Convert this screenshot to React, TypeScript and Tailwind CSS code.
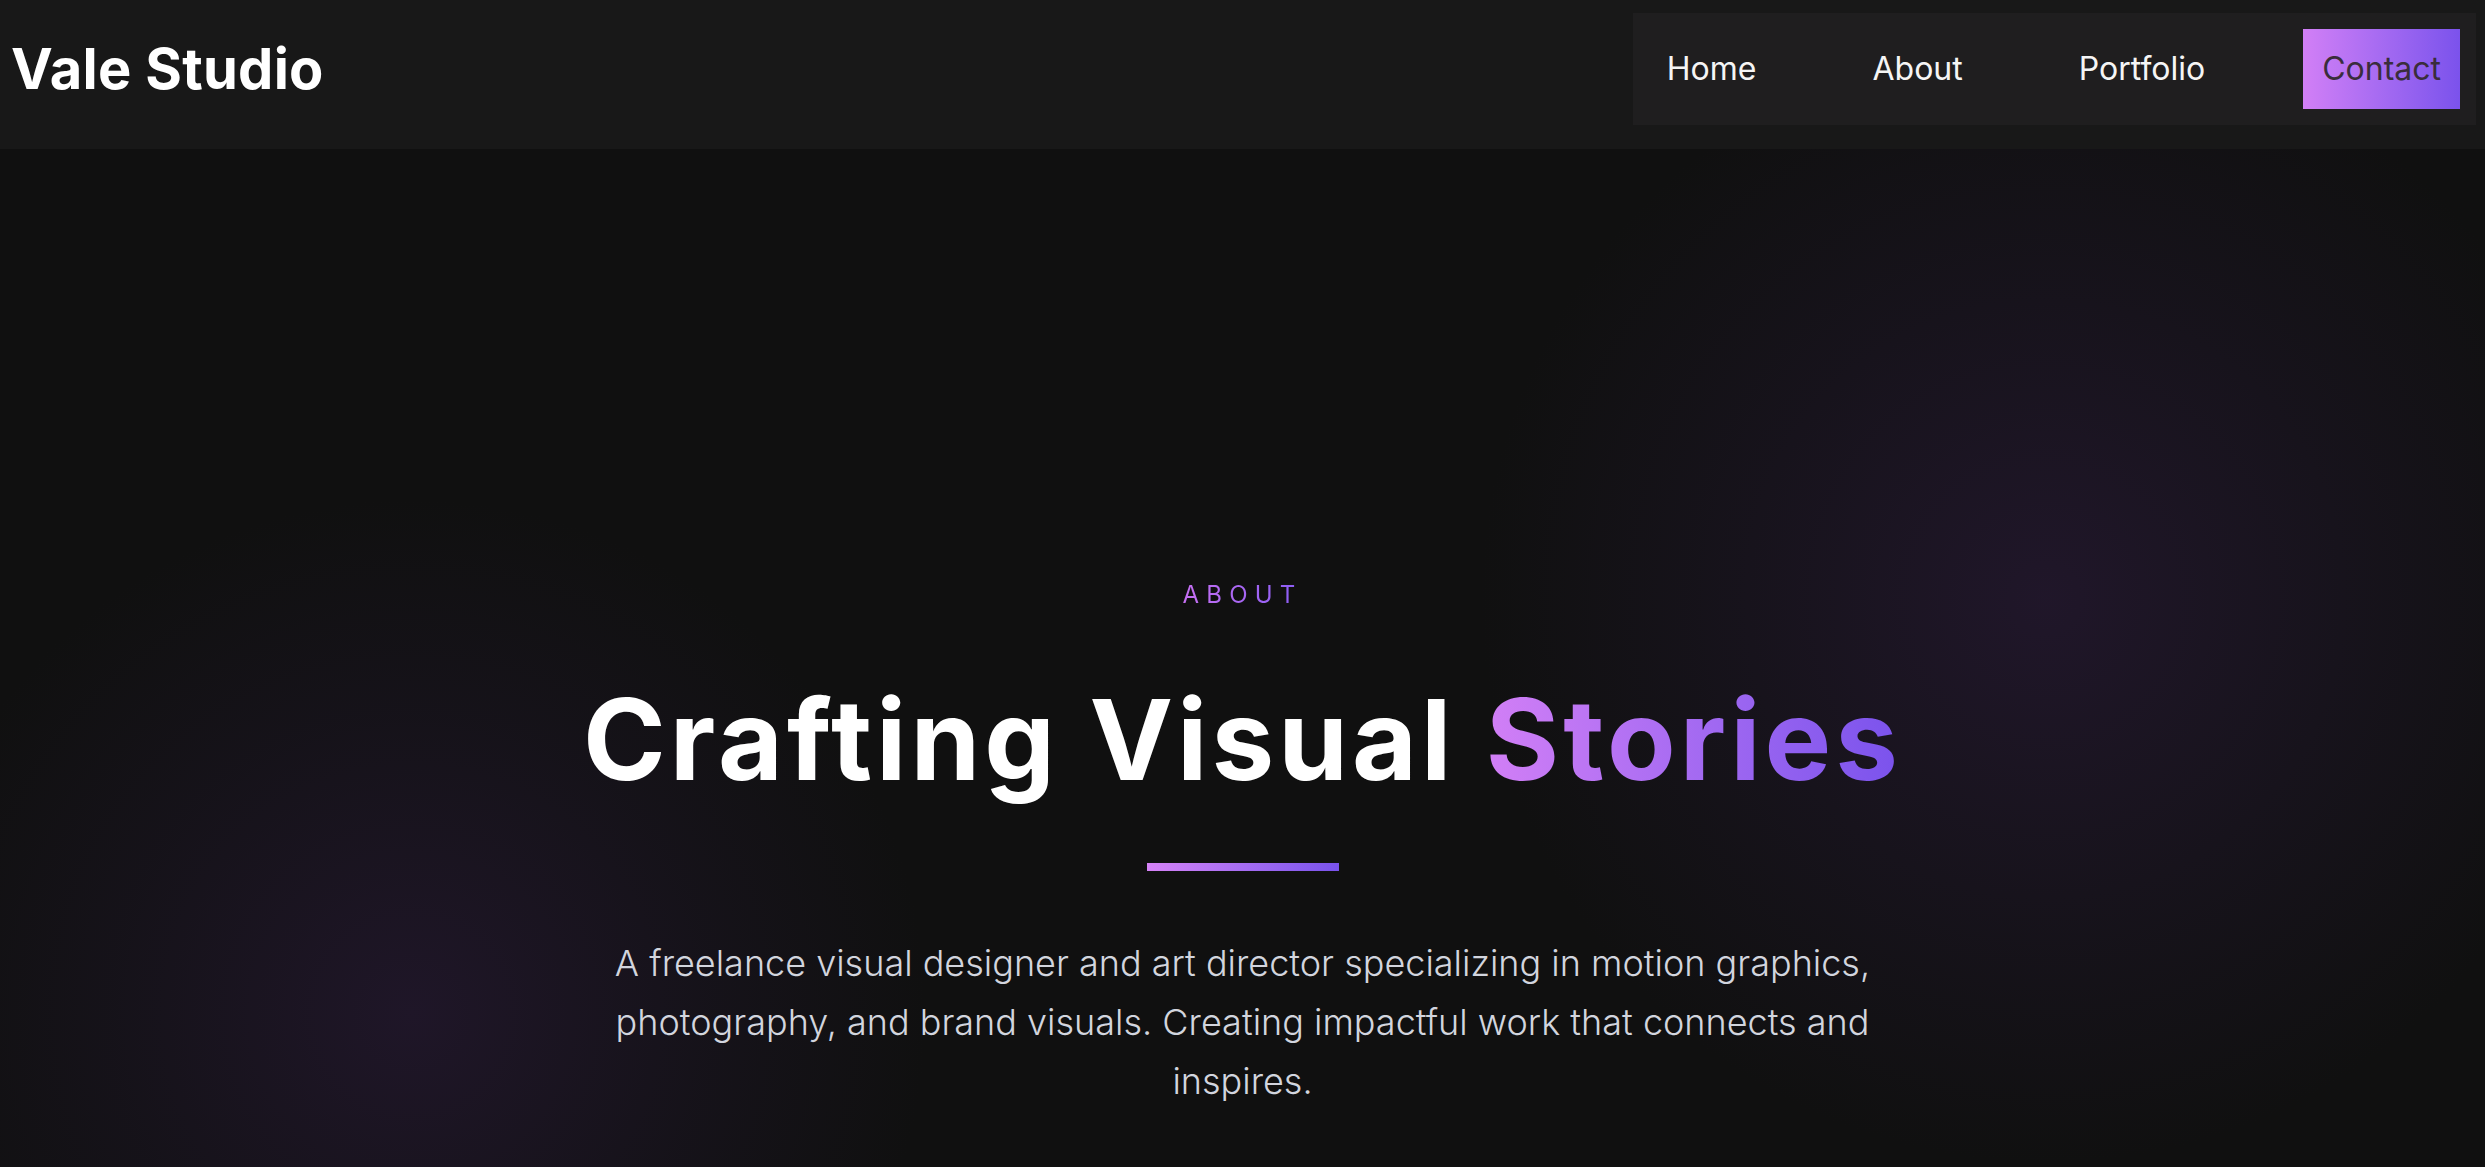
export default function App() {
  const links = ["Home", "About", "Portfolio"]

  return (
    <div className="min-h-screen bg-[#101010] font-['Inter',sans-serif] text-white">
      <header className="flex h-[149px] items-center justify-between bg-[#181818] pb-[11px] pl-[11px] pr-[9px]">
        <a href="#" className="text-[56px] font-bold leading-none tracking-[0.005em] text-white">
          Vale Studio
        </a>
        <nav className="flex items-center gap-[80px] bg-[#1f1e1f] p-4">
          {links.map((link) => (
            <a key={link} href="#" className="flex h-20 items-center px-[18px] text-[32px] text-[#f5f5f5]">
              {link}
            </a>
          ))}
          <a
            href="#"
            className="flex h-20 items-center bg-gradient-to-r from-[#d27ff6] to-[#7b52ec] px-[19px] text-[32px] text-[#3a2d3c]"
          >
            Contact
          </a>
        </nav>
      </header>

      <main className="relative overflow-hidden pb-[200px] pt-[434px]">
        {/* soft glows behind the hero */}
        <div className="pointer-events-none absolute left-[1475px] top-[-120px] h-[1140px] w-[1140px] rounded-full bg-[radial-gradient(circle,rgba(36,24,48,0.8)_0%,rgba(30,22,40,0.45)_40%,transparent_70%)]" />
        <div className="pointer-events-none absolute left-[-108px] top-[345px] h-[1040px] w-[1040px] rounded-full bg-[radial-gradient(circle,rgba(36,24,48,0.75)_0%,rgba(30,22,40,0.4)_40%,transparent_70%)]" />

        <section className="relative flex flex-col items-center text-center">
          <span className="bg-gradient-to-r from-[#c66ff2] to-[#8a5cf5] bg-clip-text text-[24px] uppercase leading-[24px] tracking-[0.3em] text-transparent">
            About
          </span>
          <h1 className="mt-[76px] text-[112px] font-bold leading-[112px] tracking-[4px]">
            Crafting Visual{" "}
            <span className="bg-gradient-to-r from-[#d27ff6] to-[#7a52ec] bg-clip-text text-transparent">
              Stories
            </span>
          </h1>
          <div className="mt-[68px] h-2 w-[192px] bg-gradient-to-r from-[#d683f7] to-[#7952ec]" />
          <p className="mt-[63px] max-w-[1270px] text-[36px] font-light leading-[59px] text-[#d2d5de]">
            A freelance visual designer and art director specializing in motion graphics, photography, and brand
            visuals. Creating impactful work that connects and inspires.
          </p>
        </section>
      </main>
    </div>
  )
}
